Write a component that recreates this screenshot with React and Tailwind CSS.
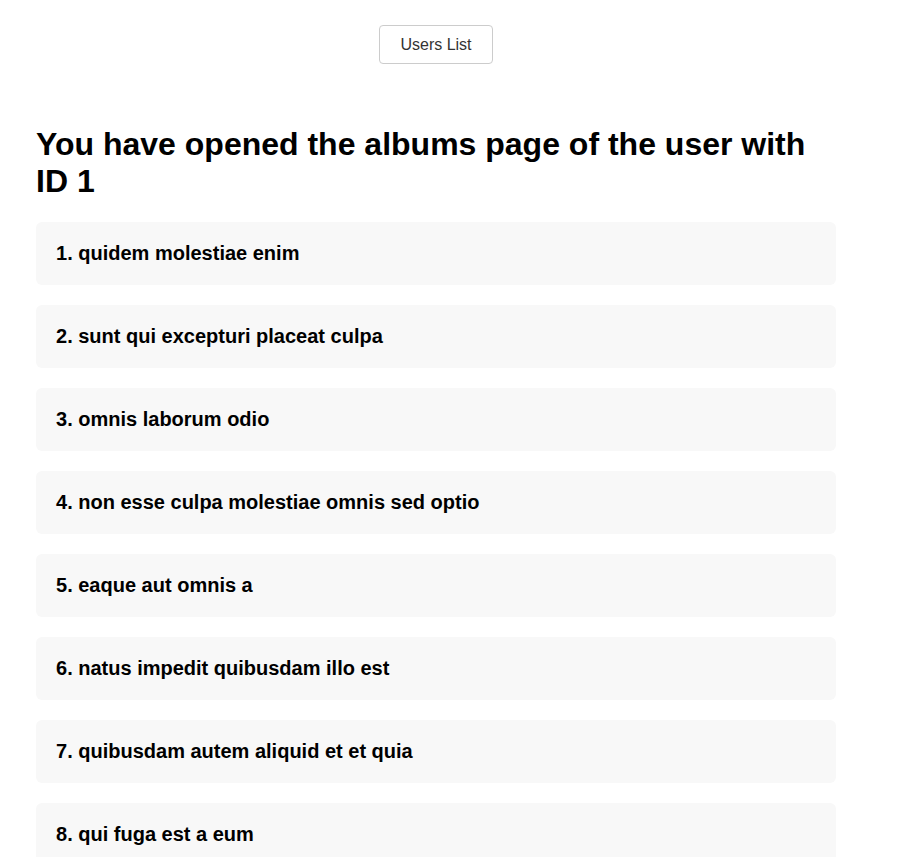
const albums = [
  'quidem molestiae enim',
  'sunt qui excepturi placeat culpa',
  'omnis laborum odio',
  'non esse culpa molestiae omnis sed optio',
  'eaque aut omnis a',
  'natus impedit quibusdam illo est',
  'quibusdam autem aliquid et et quia',
  'qui fuga est a eum',
  'saepe unde necessitatibus rem',
  'distinctio laborum qui',
];

export default function App() {
  return (
    <div className="min-h-screen bg-white font-['Liberation_Sans',Arial,sans-serif] text-black">
      <div className="w-[800px] ml-9 pt-[25px] pb-10">
        <div className="flex justify-center">
          <button className="h-[39px] px-5 border border-[#cccccc] rounded-[4px] bg-white text-base text-[#333333]">
            Users List
          </button>
        </div>
        <h1 className="mt-[62px] mb-[22px] text-[32px] leading-[37px] font-bold">
          You have opened the albums page of the user with ID 1
        </h1>
        <ul className="flex flex-col gap-5">
          {albums.map((title, i) => (
            <li key={i} className="bg-[#f8f8f8] rounded-md px-5 py-5 text-xl leading-[23px] font-bold">
              {i + 1}. {title}
            </li>
          ))}
        </ul>
      </div>
    </div>
  );
}
